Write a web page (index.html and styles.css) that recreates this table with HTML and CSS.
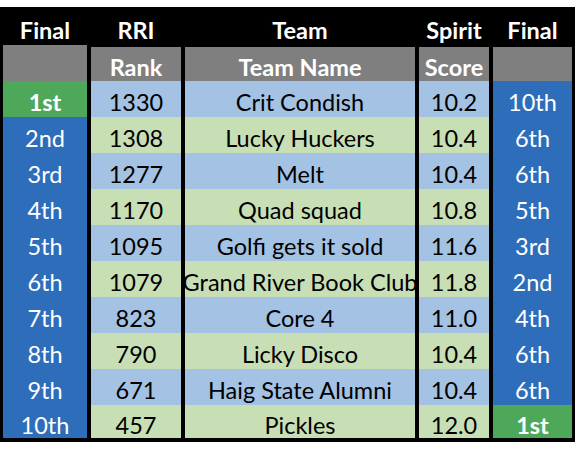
FILE: index.html
```html
<!DOCTYPE html>
<html>
<head>
<meta charset="utf-8">
<link rel="stylesheet" href="styles.css">
</head>
<body>
<div class="board">
  <div class="cell head c1">Final</div>
  <div class="cell head">RRI</div>
  <div class="cell head">Team</div>
  <div class="cell head">Spirit</div>
  <div class="cell head">Final</div>

  <div class="cell sub c1"></div>
  <div class="cell sub">Rank</div>
  <div class="cell sub">Team Name</div>
  <div class="cell sub">Score</div>
  <div class="cell sub"></div>

  <div class="cell place win">1st</div>
  <div class="cell lb">1330</div>
  <div class="cell lb team">Crit Condish</div>
  <div class="cell lb">10.2</div>
  <div class="cell place">10th</div>

  <div class="cell place">2nd</div>
  <div class="cell lg">1308</div>
  <div class="cell lg team">Lucky Huckers</div>
  <div class="cell lg">10.4</div>
  <div class="cell place">6th</div>

  <div class="cell place">3rd</div>
  <div class="cell lb">1277</div>
  <div class="cell lb team">Melt</div>
  <div class="cell lb">10.4</div>
  <div class="cell place">6th</div>

  <div class="cell place">4th</div>
  <div class="cell lg">1170</div>
  <div class="cell lg team">Quad squad</div>
  <div class="cell lg">10.8</div>
  <div class="cell place">5th</div>

  <div class="cell place">5th</div>
  <div class="cell lb">1095</div>
  <div class="cell lb team">Golfi gets it sold</div>
  <div class="cell lb">11.6</div>
  <div class="cell place">3rd</div>

  <div class="cell place">6th</div>
  <div class="cell lg">1079</div>
  <div class="cell lg team">Grand River Book Club</div>
  <div class="cell lg">11.8</div>
  <div class="cell place">2nd</div>

  <div class="cell place">7th</div>
  <div class="cell lb">823</div>
  <div class="cell lb team">Core 4</div>
  <div class="cell lb">11.0</div>
  <div class="cell place">4th</div>

  <div class="cell place">8th</div>
  <div class="cell lg">790</div>
  <div class="cell lg team">Licky Disco</div>
  <div class="cell lg">10.4</div>
  <div class="cell place">6th</div>

  <div class="cell place">9th</div>
  <div class="cell lb">671</div>
  <div class="cell lb team">Haig State Alumni</div>
  <div class="cell lb">10.4</div>
  <div class="cell place">6th</div>

  <div class="cell place">10th</div>
  <div class="cell lg">457</div>
  <div class="cell lg team">Pickles</div>
  <div class="cell lg">12.0</div>
  <div class="cell place win">1st</div>
</div>
</body>
</html>
```

FILE: styles.css
```css
html, body {
  margin: 0;
  padding: 0;
  background: #ffffff;
}

body {
  padding-top: 7px;
  font-family: Lato, "Open Sans", sans-serif;
  font-size: 23.5px;
}

.board {
  width: 575px;
  box-sizing: border-box;
  background: #000000;
  padding: 0 3px 4px 3px;
  display: grid;
  grid-template-columns: 84px 90px 230px 70px 79px;
  grid-template-rows: 40px 34px repeat(9, 36px) 33px;
  column-gap: 4px;
}

.cell {
  display: flex;
  align-items: center;
  justify-content: center;
  white-space: nowrap;
  padding-top: 6px;
  box-sizing: border-box;
  color: #000000;
}

.head {
  color: #ffffff;
  font-weight: 700;
  padding-top: 5px;
}

.sub {
  background: #7f7f7f;
  color: #ffffff;
  font-weight: 700;
}

.sub.c1 {
  margin-top: -2px;
}

.place {
  background: #2e6dba;
  color: #ffffff;
}

.place.win {
  background: #4ea85a;
  font-weight: 700;
}

.lb {
  background: #a4c2e4;
}

.lg {
  background: #c8dfb6;
}

.team {
  clip-path: inset(0 0 0 -20px);
}
```
